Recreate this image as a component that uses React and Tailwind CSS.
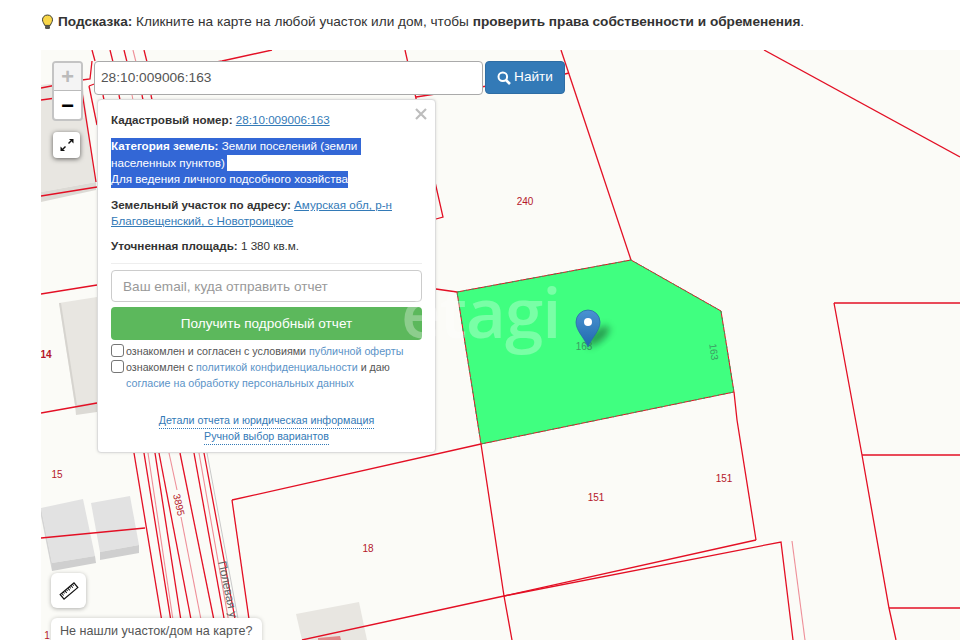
const RED = "#e30f24";
const PINK = "#ee8f98";

const redLines = [
  "92,50 95,61", "41,88 82,80 90,79 92,61", "41,100 56,98", "82,92 96,182", "89,86 97,83", "89,86 97,125",
  "110,50 113,62", "124,50 127,62", "144,50 147,62", "103,95 104,100", "119,95 120,100", "142,95 143,100", "151,95 152,100",
  "97,84 222,61 272,50", "405,50 443,217 436,219", "416,97 565,74 569,73", "561,50 631,260", "764,50 960,157",
  "41,196 97,187", "41,294 97,285", "41,413 97,403", "41,538 145,528",
  "134,453 165,640", "144,453 174,640", "155,453 184,640", "159,453 195,640", "180,453 218,640", "194,453 228,640", "204,453 239,640",
  "232,500 481,444", "232,500 252,640", "436,289 457,292",
  "481,444 504,596 512,640", "302,640 504,596 756,540", "734,392 737,420 756,540", "504,596 781,542 793,640",
  "834,303 862,455 889,608 896,640", "834,303 960,303", "862,455 960,455", "889,608 960,608",
];
const pinkLines = [
  "133,50 136,62", "132,95 133,100", "148,453 176,640", "169,453 177,490", "181,517 205,640", "199,453 232,640", "792,541 805,640",
];

function MapDrawing() {
  return (
    <svg className="absolute inset-0" width="919" height="590" viewBox="41 50 919 590">
      <defs>
        <linearGradient id="pinFill" x1="0" y1="0" x2="0" y2="1">
          <stop offset="0" stopColor="#4a93d2" />
          <stop offset="1" stopColor="#1f68ad" />
        </linearGradient>
        <filter id="pinShadow" x="-50%" y="-50%" width="200%" height="200%">
          <feGaussianBlur stdDeviation="3.500" />
        </filter>
      </defs>

      <polygon points="41,85 82,80 96,182 41,192" fill="#e8e6e1" />
      <polygon points="41,192 96,182 96,190 41,202" fill="#dcdad5" />
      <polygon points="69,90 82,88 84,118 72,120" fill="#f3f2ee" />
      <polygon points="59,303 97,297 97,403 75,405" fill="#e8e6e1" />
      <polygon points="59,303 61,303 77,405 75,405" fill="#d6d4cf" />
      <polygon points="75,405 97,402 97,412 76,415" fill="#dcdad5" />
      <polygon points="41,508 83,499 95,556 52,563" fill="#e2e2e2" />
      <polygon points="41,508 52,563 52,571 41,516" fill="#d4d4d4" />
      <polygon points="52,563 95,556 96,563 52,571" fill="#cfcfcf" />
      <polygon points="91,503 130,496 139,545 100,552" fill="#e2e2e2" />
      <polygon points="100,552 139,545 139,553 100,560" fill="#cfcfcf" />
      <polygon points="296,614 359,602 367,640 302,640" fill="#e8e6e1" />
      <polygon points="318,640 318,638 340,636 341,640" fill="#e08a8a" />

      <polyline points="207,453 242,640" fill="none" stroke="#c8c8c8" strokeWidth="1" />
      {pinkLines.map((p) => <polyline key={p} points={p} fill="none" stroke={PINK} strokeWidth="1.100" />)}
      {redLines.map((p) => <polyline key={p} points={p} fill="none" stroke={RED} strokeWidth="1.300" />)}

      <polygon points="457,292 631,260 721,311 734,392 481,444" fill="#40ff80" stroke={RED} strokeWidth="1" />
      <polygon points="457,292 631,260 721,311 734,392 481,444" fill="none" stroke="#2fa85c" strokeWidth="1" strokeDasharray="3 4" />

      <g fontFamily="Liberation Sans, sans-serif" fontSize="10" fill="#b5172a" textAnchor="middle">
        <text x="525" y="205">240</text>
        <text x="596" y="501">151</text>
        <text x="724" y="482">151</text>
        <text x="368" y="552">18</text>
        <text x="57" y="478">15</text>
        <text x="46" y="358" fontWeight="700">14</text>
        <text x="47" y="639">1</text>
        <text x="178" y="505" transform="rotate(77 178 505)" dominantBaseline="middle">3895</text>
        <text x="584" y="350" fill="#3d9c63">163</text>
        <text x="713" y="352" fill="#3d9c63" transform="rotate(82 713 352)" dominantBaseline="middle">163</text>
      </g>
      <text x="218" y="562" transform="rotate(78 218 562)" fontFamily="Liberation Sans, sans-serif" fontSize="12" fill="#666">Полевая у</text>

      <ellipse cx="598" cy="336" rx="14" ry="6" transform="rotate(-40 598 336)" fill="#0c3d22" opacity="0.5" filter="url(#pinShadow)" />
      <path d="M588 347C584 337 576 331 576 322A12 12 0 1 1 600 322C600 331 592 337 588 347Z" fill="url(#pinFill)" stroke="#2a6ca8" strokeWidth="0.800" />
      <circle cx="588" cy="322" r="4" fill="#fff" />
    </svg>
  );
}

function Bulb() {
  return (
    <svg width="13" height="16" viewBox="0 0 13 16" className="shrink-0">
      <path d="M6.500 1C3.400 1 1.500 3.200 1.500 5.800c0 2.300 1.600 3.600 2.200 5.600h5.600c.6-2 2.200-3.300 2.200-5.600C11.500 3.200 9.600 1 6.500 1Z" fill="#f8d648" stroke="#3f3f35" strokeWidth="1" />
      <rect x="4" y="11.500" width="5" height="3.500" rx="1.200" fill="#55554f" />
    </svg>
  );
}

function Search() {
  return (
    <svg width="14" height="14" viewBox="0 0 14 14" fill="none" stroke="#fff" className="shrink-0">
      <circle cx="5.800" cy="5.800" r="4.300" strokeWidth="2" />
      <path d="M9 9l4 4" strokeWidth="2.600" />
    </svg>
  );
}

function Expand() {
  return (
    <svg width="16" height="16" viewBox="0 0 16 16" fill="#111" stroke="#111">
      <path d="M9.500 6.500L12 4" strokeWidth="1.400" />
      <path d="M6.500 9.500L4 12" strokeWidth="1.400" />
      <path d="M10 2H14.500V6.500Z" stroke="none" />
      <path d="M1.500 9.500V14H6Z" stroke="none" />
    </svg>
  );
}

function Ruler() {
  return (
    <svg width="20" height="20" viewBox="0 0 20 20">
      <g transform="rotate(-40 10 10)">
        <rect x="1" y="7" width="18" height="6" fill="#fff" stroke="#111" strokeWidth="1.200" />
        <path d="M3 7v3M5 7v2M7 7v3M9 7v2M11 7v3M13 7v2M15 7v3M17 7v2" stroke="#111" strokeWidth="1" />
      </g>
    </svg>
  );
}

function Close() {
  return (
    <svg width="12" height="12" viewBox="0 0 12 12" stroke="#bdbdbd" strokeWidth="2.200">
      <path d="M1 1l10 10M11 1L1 11" />
    </svg>
  );
}

function Popup() {
  return (
    <div className="absolute left-[56px] top-[49px] flex h-[354px] w-[339px] flex-col rounded-[4px] border border-[#dcdcdc] bg-white px-[13px] pt-[11px] text-[11.650px] leading-[17px] text-[#333] shadow-[0_0_3px_rgba(0,0,0,0.12)]">
      <button className="absolute right-[8px] top-[8px]"><Close /></button>
      <p className="whitespace-nowrap"><b>Кадастровый номер:</b> <a className="text-[#337ab7] underline">28:10:009006:163</a></p>
      <div className="mt-[10px] whitespace-nowrap leading-[16.500px] text-white">
        <div className="w-[250px] bg-[#3367d6]"><b>Категория земель:</b> Земли поселений (земли</div>
        <div className="w-[116px] bg-[#3367d6]">населенных пунктов)</div>
        <div className="w-[237px] bg-[#3367d6]">Для ведения личного подсобного хозяйства</div>
      </div>
      <p className="mt-[9.500px] leading-[16px]"><b>Земельный участок по адресу:</b> <a className="text-[#337ab7] underline">Амурская обл, р-н<br />Благовещенский, с Новотроицкое</a></p>
      <p className="mt-[8px]"><b>Уточненная площадь:</b> 1 380 кв.м.</p>
      <div className="mt-[9px] h-px w-[311px] shrink-0 bg-[#eeeeee]" />
      <div className="mt-[6px] flex h-[32px] w-[311px] shrink-0 items-center rounded-[4px] border border-[#cccccc] bg-white px-[11px] text-[13.600px] text-[#999]">Ваш email, куда отправить отчет</div>
      <div className="mt-[5px] flex h-[33px] w-[311px] shrink-0 items-center justify-center rounded-[4px] bg-[#5cb85c] text-[13.600px] text-white">Получить подробный отчет</div>
      <div className="mt-[3px] flex items-start gap-[2px] text-[10.700px] leading-[16px] text-[#555]">
        <span className="mt-[1px] h-[13px] w-[13px] shrink-0 rounded-[3px] border border-[#767676] bg-white" />
        <span>ознакомлен и согласен с условиями <a className="text-[#5b93c7]">публичной оферты</a></span>
      </div>
      <div className="flex items-start gap-[2px] text-[10.700px] leading-[16px] text-[#555]">
        <span className="mt-[1px] h-[13px] w-[13px] shrink-0 rounded-[3px] border border-[#767676] bg-white" />
        <span>ознакомлен с <a className="text-[#5b93c7]">политикой конфиденциальности</a> и даю<br /><a className="text-[#5b93c7]">согласие на обработку персональных данных</a></span>
      </div>
      <div className="mt-[22px] flex flex-col items-center text-[10.700px] leading-[15px] text-[#337ab7]">
        <a className="border-b border-dotted border-[#337ab7]">Детали отчета и юридическая информация</a>
        <a className="border-b border-dotted border-[#337ab7]">Ручной выбор вариантов</a>
      </div>
    </div>
  );
}

export default function App() {
  return (
    <div className="flex h-[640px] w-[960px] flex-col overflow-hidden bg-white font-['Liberation_Sans',sans-serif]">
      <div className="ml-[41px] mt-[12px] flex h-[20px] items-center gap-[4px] text-[13.630px] text-[#333]">
        <Bulb />
        <p className="whitespace-nowrap"><b>Подсказка:</b> Кликните на карте на любой участок или дом, чтобы <b>проверить права собственности и обременения</b>.</p>
      </div>
      <div className="relative ml-[41px] mt-[18px] h-[590px] w-[919px] overflow-hidden bg-[#fbfbf7]">
        <MapDrawing />

        <div className="absolute left-[11px] top-[11px] flex h-[60px] w-[31px] flex-col overflow-hidden rounded-[4px] border-2 border-[#c4c4c4] bg-white font-['Liberation_Mono',monospace] text-[22px] font-bold">
          <div className="flex h-[28px] items-center justify-center border-b border-[#bbbbbb] bg-[#f4f4f4] pt-[3px] text-[#bbbbbb]">+</div>
          <div className="flex flex-1 items-center justify-center text-black">−</div>
        </div>
        <div className="absolute left-[12px] top-[82px] flex h-[26px] w-[27px] items-center justify-center rounded-[4px] bg-white shadow-[0_1px_5px_rgba(0,0,0,0.6)]"><Expand /></div>

        <div className="absolute left-[53px] top-[11px] flex h-[34px] w-[389px] items-center rounded-[4px] border border-[#aaaaaa] bg-white px-[6px] pt-[1px] text-[13.700px] text-[#555]">28:10:009006:163</div>
        <div className="absolute left-[444px] top-[11px] flex h-[33px] w-[80px] items-center justify-center gap-[3px] rounded-[4px] border border-[#2e6da4] bg-[#337ab7] text-[13.600px] text-white"><Search />Найти</div>

        <Popup />

        <div className="pointer-events-none absolute left-[360px] top-[216px] font-['Open_Sans',sans-serif] text-[69px] font-semibold leading-[90px] tracking-[-1px] text-white/30">etagi</div>

        <div className="absolute left-[10px] top-[523px] flex h-[35px] w-[35px] items-center justify-center rounded-[6px] bg-white shadow-[0_1px_4px_rgba(0,0,0,0.3)]"><Ruler /></div>
        <div className="absolute left-[10px] top-[568px] h-[40px] w-[211px] whitespace-nowrap rounded-[6px] bg-white pl-[9px] pt-[5px] text-[12.600px] leading-[16px] text-[#555] shadow-[0_0_4px_rgba(0,0,0,0.2)]">Не нашли участок/дом на карте?</div>
      </div>
    </div>
  );
}
